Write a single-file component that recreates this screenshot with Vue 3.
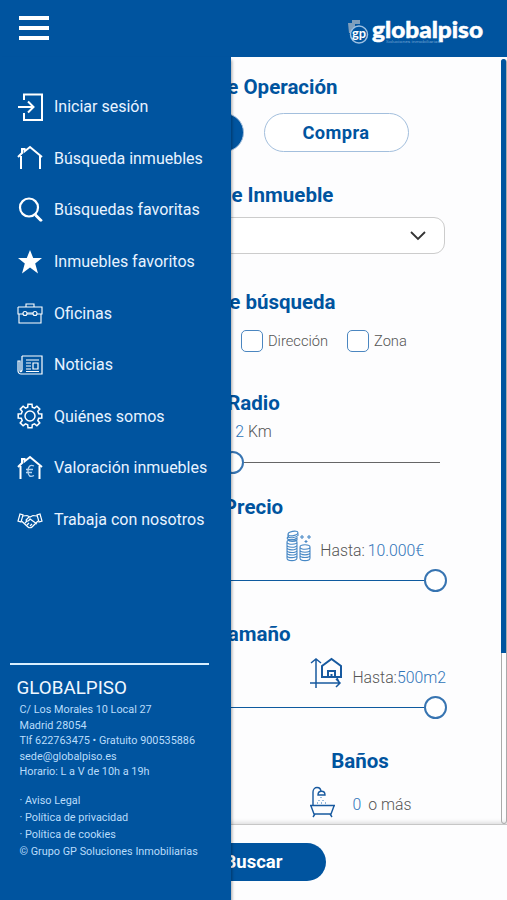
<template>
  <div class="app">
    <!-- Cabecera -->
    <header class="header">
      <button class="menu-button" aria-label="Menú" @click="menuOpen = !menuOpen">
        <span></span>
        <span></span>
        <span></span>
      </button>
      <svg class="logo" width="140" height="32" viewBox="0 0 140 32">
        <path d="M1 7h4V4h8v4h-5v4H5v5H2z" fill="#7f9fbc" />
        <circle cx="12" cy="18.500" r="8.500" fill="#00549f" stroke="#9cc0e2" stroke-width="1.500" />
        <text x="5" y="22" class="logo-mark" textLength="14" lengthAdjust="spacingAndGlyphs">gp</text>
        <text x="25" y="21.500" class="logo-name" textLength="111" lengthAdjust="spacingAndGlyphs">globalpiso</text>
        <text x="39" y="26.500" class="logo-sub" textLength="54" lengthAdjust="spacingAndGlyphs">Soluciones inmobiliarias</text>
      </svg>
    </header>

    <!-- Formulario de búsqueda -->
    <main class="content">
      <div class="filters">
        <section class="section operation">
          <h2>Tipo de Operación</h2>
          <div class="pills">
            <button
              v-for="op in operations"
              :key="op"
              class="pill"
              :class="{ active: op === operation }"
              @click="operation = op"
            >{{ op }}</button>
          </div>
        </section>

        <section class="section property">
          <h2>Tipo de Inmueble</h2>
          <div class="select">
            <svg width="16" height="10" viewBox="0 0 16 10">
              <path d="M1 1l7 7 7-7" fill="none" stroke="#333" stroke-width="1.800" />
            </svg>
          </div>
        </section>

        <section class="section search">
          <h2>Tipo de búsqueda</h2>
          <div class="checks">
            <label v-for="type in searchTypes" :key="type" class="check">
              <input type="checkbox" :value="type" v-model="selectedTypes" />
              <span>{{ type }}</span>
            </label>
          </div>
        </section>

        <section class="section radius">
          <h2>Radio</h2>
          <p class="radius-value"><b>2</b> Km</p>
          <div class="slider half"><i></i></div>
        </section>

        <section class="section range">
          <h2>Precio</h2>
          <div class="range-row price">
            <svg width="26" height="32" viewBox="0 0 26 32" fill="none" stroke="#4788c5" stroke-width="1.100">
              <ellipse cx="7" cy="3.500" rx="5" ry="2.200" transform="rotate(-12 7 3.500)" />
              <path d="M2 4.500v2c1 2 8 1.500 10-1v-2M1 8c1 3 8 2 10 0v2c-2 2-8 2-9 0M1 8l2-2" />
              <path d="M1 12v16c0 3.500 10 3.500 10 0V12c0 3-10 3-10 0s10-3 10 0M1 15c0 3 10 3 10 0M1 17.600c0 3 10 3 10 0M1 20.200c0 3 10 3 10 0M1 22.800c0 3 10 3 10 0M1 25.400c0 3 10 3 10 0" />
              <path d="M14 17v11c0 3.500 10 3.500 10 0V17c0 3-10 3-10 0s10-3 10 0M14 20c0 3 10 3 10 0M14 22.600c0 3 10 3 10 0M14 25.200c0 3 10 3 10 0" />
              <path d="M16 5v4M14 7h4M23 5v4M21 7h4M20 10v3M18.500 11.500h3" />
            </svg>
            <span class="price-text">Hasta: <b>10.000€</b></span>
          </div>
          <div class="slider"><i></i></div>
        </section>

        <section class="section range">
          <h2>Tamaño</h2>
          <div class="range-row size">
            <svg width="32" height="32" viewBox="0 0 32 32" fill="none" stroke="#17599f" stroke-width="1.500">
              <path d="M6 31V2M1 6l5-4 5 4M0 26h30M26 22l4 4-4 4M27 21l2 4" />
              <path d="M12 20V9l9.500-7L31 9v11H12zM18 20v-6h7v6M21.500 20v-3" stroke-width="2" />
            </svg>
            <span class="size-text">Hasta:<b>500m2</b></span>
          </div>
          <div class="slider"><i></i></div>
        </section>

        <section class="rooms">
          <div class="room">
            <h2>Baños</h2>
            <div class="room-value">
              <svg width="28" height="32" viewBox="0 0 28 32" fill="none" stroke="#17599f" stroke-width="1.400">
                <path d="M1 19.500h25M2 20l3 8h17l3-8M6 28l-2 3M21 28l2 3M4 19V6c0-6 8-6 8 0" />
                <path d="M9 9c0-5 7-5 7 0z" />
                <path d="M12 11v1M10 14v1M14 14v1M8 17h1M12 17h1M16 17h1" stroke="#6d9fcf" />
              </svg>
              <span><b>0</b> o más</span>
            </div>
          </div>
        </section>
      </div>
      <div class="scrollbar"><div class="scrollbar-thumb"></div></div>
    </main>

    <footer class="actions">
      <button class="submit">Buscar</button>
    </footer>

    <!-- Menú lateral -->
    <aside v-if="menuOpen" class="drawer">
      <nav class="nav">
        <a v-for="item in menu" :key="item.label" class="nav-item">
          <svg width="26" height="28" viewBox="0 0 26 28" fill="none" stroke="#fff" :stroke-width="item.weight">
            <path
              v-for="(d, i) in item.paths"
              :key="i"
              :d="d"
              :fill="item.solid ? '#fff' : 'none'"
            />
            <path v-if="item.detail" :d="item.detail" stroke="#b5d4f0" stroke-width="1.300" />
          </svg>
          <span>{{ item.label }}</span>
        </a>
      </nav>

      <div class="company">
        <h3>GLOBALPISO</h3>
        <p v-for="line in address" :key="line">{{ line }}</p>
        <ul>
          <li v-for="link in legal" :key="link">{{ link }}</li>
        </ul>
      </div>
    </aside>
  </div>
</template>

<script setup>
import { ref } from 'vue'

const menuOpen = ref(true)

const operations = ['Alquiler', 'Compra']
const operation = ref('Alquiler')

const searchTypes = ['Población', 'Dirección', 'Zona']
const selectedTypes = ref([])

// Contorno del engranaje con ocho dientes
const gearPath = () => {
  const points = []
  const radii = [9, 12, 12, 9]
  const offsets = [-0.26, -0.17, 0.17, 0.26]
  for (let tooth = 0; tooth < 8; tooth++) {
    radii.forEach((r, i) => {
      const a = (tooth * Math.PI) / 4 + offsets[i]
      points.push(`${(13 + r * Math.cos(a)).toFixed(1)} ${(14 + r * Math.sin(a)).toFixed(1)}`)
    })
  }
  return `M${points.join('L')}Z`
}

const house = 'M1 13L5 9V5H7.500V7.500L13 3L25 13'

const menu = [
  { label: 'Iniciar sesión', weight: 2, paths: ['M7 7V1.500H25V27H7V20', 'M1 14H16M11 8.500L16.500 14L11 19.500'] },
  { label: 'Búsqueda inmuebles', weight: 2, paths: [house, 'M4 12V25M23 12V25'] },
  { label: 'Búsquedas favoritas', weight: 2.2, paths: ['M21 11.500A9 9 0 1 1 3 11.500A9 9 0 1 1 21 11.500', 'M18 18L25 25M18.500 19.500L24 25'] },
  { label: 'Inmuebles favoritos', weight: 0, solid: true, paths: ['M13 2L16.200 10H25L18.200 15.500L21 25.500L13 19.500L5 25.500L7.800 15.500L1 10H9.800Z'] },
  { label: 'Oficinas', weight: 1.1, paths: ['M1 8H25V15H20M16 15H10M6 15H1V8M2 15V24H24V15M9 8V5H17V8', 'M10 14.500A2 2 0 1 1 6 14.500A2 2 0 1 1 10 14.500M20 14.500A2 2 0 1 1 16 14.500A2 2 0 1 1 20 14.500M10 14H16'] },
  { label: 'Noticias', weight: 1.2, paths: ['M5 5H25V23H4C1 23 1 20 1 19V10H3V20C3 21 5 21 5 19V5', 'M9 9H22M9 12H14M9 15H14M9 18H14M16 12H21V18H16ZM9 20.500H22'] },
  { label: 'Quiénes somos', weight: 1.5, paths: [gearPath(), 'M18 14A5 5 0 1 1 8 14A5 5 0 1 1 18 14'] },
  { label: 'Valoración inmuebles', weight: 2, paths: [house, 'M3.500 12V25M22.500 12V25'], detail: 'M17 12C13 10 11 13 11 17C11 22 13 23.500 17 21.500M9 15.500H16M9 18.500H15' },
  { label: 'Trabaja con nosotros', weight: 1.2, paths: ['M3 8L1 15L4 16L6 9ZM23 8L25 15L22 16L20 9Z', 'M6 10L10 9.500L13 11L16 9.500L20 10M4.500 15L11 21C12 22 14 22 15 21L21 15M12 11L9 14C10 16 12 15 13 13L20 18M8 17L10 15M10 19L12 17M13 20L15 18'] }
]

const address = [
  'C/ Los Morales 10 Local 27',
  'Madrid 28054',
  'Tlf 622763475 • Gratuito 900535886',
  'sede@globalpiso.es',
  'Horario: L a V de 10h a 19h'
]

const legal = [
  '· Aviso Legal',
  '· Política de privacidad',
  '· Política de cookies',
  '© Grupo GP Soluciones Inmobiliarias'
]
</script>

<style>
body {
  margin: 0;
}
</style>

<style scoped>
.app {
  position: relative;
  width: 507px;
  height: 900px;
  display: flex;
  flex-direction: column;
  overflow: hidden;
  background-color: #fdfdfe;
  font-family: Roboto, "Liberation Sans", sans-serif;
  color: #555;
}

.app * {
  box-sizing: border-box;
}

button {
  font-family: inherit;
  border: none;
  cursor: pointer;
}

b {
  font-weight: 300;
  color: #2f74b8;
}

/* Cabecera */
.header {
  height: 57px;
  flex: none;
  display: flex;
  align-items: flex-start;
  justify-content: space-between;
  padding: 16px 20px 0 19px;
  background-color: #00549f;
}

.menu-button {
  width: 30px;
  display: flex;
  flex-direction: column;
  gap: 6px;
  padding: 0;
  background: none;
}

.menu-button span {
  height: 4px;
  background-color: #fff;
}

.logo {
  overflow: visible;
}

.logo-mark {
  font: bold 13px Lato, sans-serif;
  fill: #fff;
}

.logo-name {
  font: 900 23px Lato, sans-serif;
  fill: #fff;
  stroke: #fff;
  stroke-width: 0.5px;
}

.logo-sub {
  font: 4px Roboto, sans-serif;
  fill: #6aa0d2;
}

/* Filtros */
.content {
  height: 768px;
  flex: none;
  display: flex;
  border-bottom: 1px solid #c6c6c6;
  box-shadow: inset 0 -4px 4px -2px rgba(0, 0, 0, 0.12);
}

.filters {
  flex: 1;
  padding: 18px 56px 0 62px;
  overflow: hidden;
}

.scrollbar {
  width: 6px;
  margin: 2px 0 0;
  border: 1px solid #aaa;
  border-radius: 3px;
}

.scrollbar-thumb {
  width: 5px;
  height: 594px;
  margin: -1px;
  background-color: #00549f;
  border-radius: 3px 3px 0 0;
}

h2 {
  margin: 0;
  height: 24px;
  line-height: 24px;
  text-align: center;
  font-size: 20.5px;
  font-weight: 700;
  color: #00549f;
}

.operation {
  height: 108px;
}

.property {
  height: 107px;
}

.search {
  height: 101px;
}

.radius {
  height: 104px;
}

.range {
  height: 127px;
}

.pills {
  display: flex;
  justify-content: center;
  gap: 20px;
  margin-top: 14px;
}

.pill {
  width: 145px;
  height: 39px;
  border: 1px solid #a3bfdd;
  border-radius: 20px;
  background-color: #fff;
  color: #00549f;
  font-size: 18.3px;
  font-weight: 700;
  letter-spacing: 0.4px;
}

.pill.active {
  background-color: #00549f;
  color: #fff;
}

.select {
  height: 37px;
  margin-top: 10px;
  display: flex;
  align-items: center;
  justify-content: flex-end;
  padding-right: 18px;
  border: 1px solid #ccc;
  border-radius: 11px;
  background-color: #fff;
}

.checks {
  display: flex;
  margin: 16px 0 0 38px;
}

.check {
  width: 106px;
  flex: none;
  display: flex;
  align-items: center;
  gap: 5px;
  font-size: 14.7px;
  font-weight: 300;
}

.check:first-child {
  width: 141px;
}

.check input {
  appearance: none;
  width: 22px;
  height: 22px;
  flex: none;
  margin: 0;
  border: 1px solid #4b86c0;
  border-radius: 5px;
  background-color: #fff;
}

.radius-value {
  height: 34px;
  margin: 0;
  line-height: 34px;
  text-align: center;
  font-size: 15.800px;
  font-weight: 300;
}

.slider {
  height: 24px;
  display: flex;
  align-items: center;
}

.slider::before {
  content: "";
  flex: 1;
  height: 1px;
  background-color: #0e5a9f;
}

.slider i {
  width: 23px;
  height: 23px;
  margin-right: -2px;
  border: 2px solid #3774b1;
  border-radius: 50%;
  background-color: #fff;
}

.slider.half {
  margin-top: 1px;
}

.slider.half::before {
  flex: none;
  width: 159px;
}

.slider.half i {
  margin: 0;
}

.slider.half::after {
  content: "";
  width: 196px;
  height: 1px;
  background-color: #666;
}

.range-row {
  display: flex;
  align-items: center;
  justify-content: flex-end;
  height: 40px;
  margin: 9px 0 0;
  font-size: 15.8px;
  font-weight: 300;
}

.range-row svg {
  margin-top: -4px;
}

.range-row span {
  padding-top: 5px;
}

.price {
  padding-right: 21px;
  gap: 8px;
}

.price-text {
  word-spacing: -1px;
}

.size {
  gap: 10px;
}

.size-text {
  margin-right: -1px;
}

.rooms {
  display: flex;
  justify-content: flex-end;
}

.room {
  width: 214px;
  flex: none;
  margin-right: -22px;
}

.room-value {
  display: flex;
  align-items: center;
  justify-content: center;
  gap: 16px;
  margin-top: 13px;
  font-size: 15.8px;
  font-weight: 300;
}

.room-value span {
  padding-top: 4px;
}

.room-value b {
  margin-right: 3px;
}

/* Botón buscar */
.actions {
  display: flex;
  justify-content: center;
  padding-top: 18px;
}

.submit {
  width: 145px;
  height: 38px;
  border-radius: 19px;
  background-color: #00549f;
  color: #fff;
  font-size: 18.5px;
  font-weight: 700;
}

/* Menú lateral */
.drawer {
  position: absolute;
  top: 57px;
  left: 0;
  bottom: 0;
  width: 231px;
  display: flex;
  flex-direction: column;
  justify-content: space-between;
  background-color: #00549f;
  color: #fff;
  box-shadow: 1px 3px 3px rgba(0, 0, 0, 0.35);
}

.nav {
  padding: 24px 0 0 17px;
}

.nav-item {
  height: 51.6px;
  display: flex;
  align-items: center;
  gap: 11px;
  font-size: 16px;
  color: #e8f3ff;
}

.company {
  margin: 0 22px 0 10px;
  height: 237px;
  padding: 12px 0 0 9.5px;
  border-top: 2px solid #d8efff;
  font-size: 10.85px;
  color: #b9dcfb;
}

.company h3 {
  margin: 0 0 3px -3px;
  line-height: 22px;
  font-size: 18.800px;
  font-weight: 400;
  color: #f0f8ff;
}

.company p {
  margin: 0;
  line-height: 15.5px;
  white-space: nowrap;
}

.company ul {
  margin: 12px 0 0;
  padding: 0;
  list-style: none;
}

.company li {
  line-height: 17.2px;
  white-space: nowrap;
}
</style>
